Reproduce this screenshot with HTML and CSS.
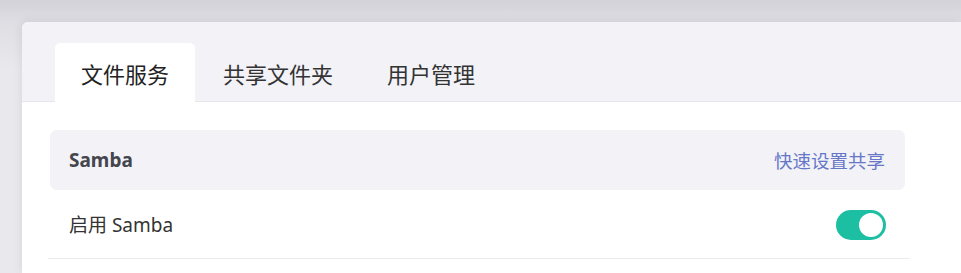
FILE: index.html
```html
<!DOCTYPE html>
<html lang="zh-CN">
<head>
    <meta charset="UTF-8">
    <meta name="viewport" content="width=device-width, initial-scale=1.0">
    <title>文件服务</title>
    <link rel="stylesheet" href="styles.css">
</head>
<body>
    <div class="card">
        <!-- 标签栏 -->
        <ul class="tabs">
            <li class="tab active">文件服务</li>
            <li class="tab">共享文件夹</li>
            <li class="tab">用户管理</li>
        </ul>

        <div class="content">
            <div class="section-head">
                <span class="section-title">Samba</span>
                <a class="quick-link" href="#">快速设置共享</a>
            </div>
            <div class="row">
                <span class="row-label">启用 Samba</span>
                <label class="switch">
                    <input type="checkbox" checked>
                    <span class="slider"></span>
                </label>
            </div>
        </div>
    </div>
</body>
</html>
```

FILE: styles.css
```css
html, body {
    height: 100%;
}
body {
    font-family: "Noto Sans", "Noto Sans CJK SC", sans-serif;
    margin: 0;
    padding: 22px 0 0 22px;
    box-sizing: border-box;
    overflow: hidden;
    background: linear-gradient(to bottom, #d3d2d8 0, #dfdee3 22px, #e9e9ed 70px);
}
.card {
    height: 100%;
    background: white;
    border-radius: 6px 0 0 0;
    box-shadow: 0 0 10px rgba(60, 60, 80, 0.12);
    overflow: hidden;
}
.tabs {
    list-style: none;
    margin: 0;
    padding: 21px 0 0 33px;
    height: 58px;
    display: flex;
    gap: 2px;
    background: #f2f2f7;
    border-bottom: 1px solid #e6e6ec;
}
.tab {
    padding: 0 26px;
    height: 59px;
    line-height: 62px;
    font-size: 22px;
    color: #333;
}
.tab.active {
    background: white;
    border-radius: 5px 5px 0 0;
    color: #222;
}
.content {
    padding: 28px 0 0 26px;
    width: 862px;
}
.section-head {
    margin: 0 5px 0 2px;
    height: 60px;
    padding: 0 20px 0 19px;
    display: flex;
    justify-content: space-between;
    align-items: center;
    background: #f2f2f7;
    border-radius: 7px;
}
.section-title {
    font-size: 19px;
    font-weight: bold;
    color: #45454d;
}
.quick-link {
    font-size: 18.5px;
    color: #6777c8;
    text-decoration: none;
}
.row {
    height: 68px;
    padding: 0 24px 0 21px;
    display: flex;
    justify-content: space-between;
    align-items: center;
    border-bottom: 1px solid #ececf0;
}
.row-label {
    font-size: 19px;
    color: #333;
}
.switch {
    position: relative;
    width: 50px;
    height: 30px;
    margin-top: 2px;
}
.switch input {
    display: none;
}
.slider {
    position: absolute;
    inset: 0;
    background: #1dbfa3;
    border-radius: 15px;
}
.slider::after {
    content: "";
    position: absolute;
    top: 3px;
    right: 3px;
    width: 24px;
    height: 24px;
    border-radius: 50%;
    background: white;
}
```
